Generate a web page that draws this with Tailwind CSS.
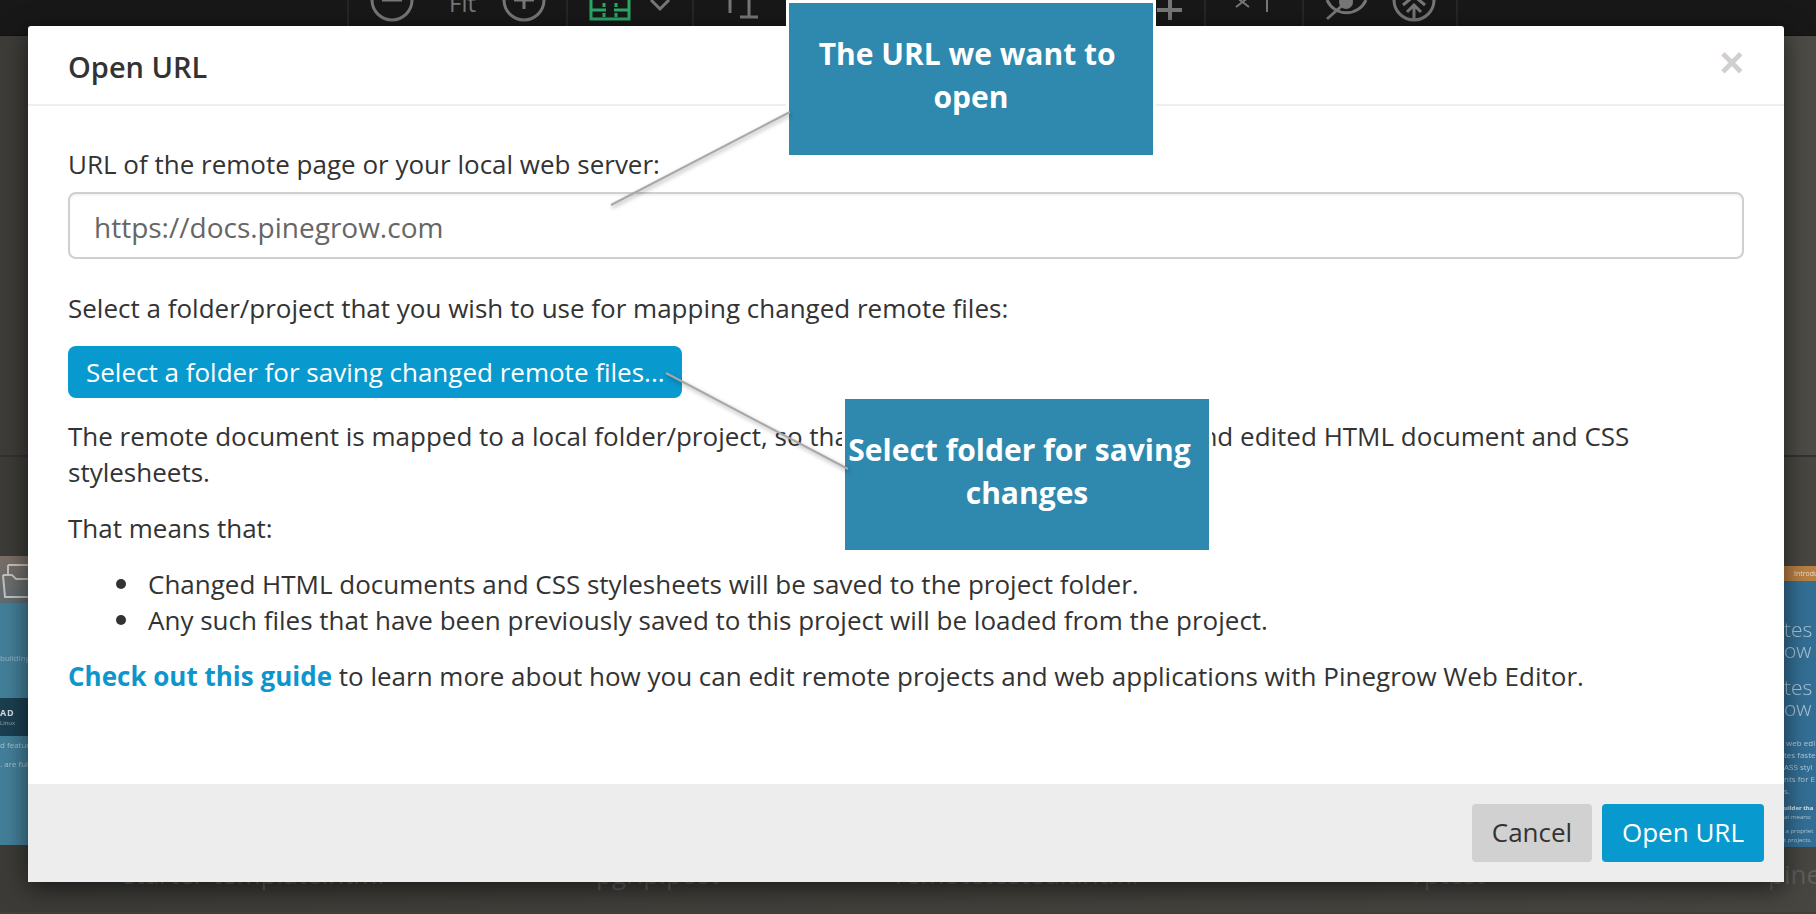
<!DOCTYPE html>
<html lang="en">
  <head>
    <meta charset="UTF-8" />
    <title>Open URL</title>
    <script src="https://cdn.jsdelivr.net/npm/@tailwindcss/browser@4"></script>
  </head>
  <body class="m-0 p-0 overflow-hidden bg-[#403f3b]">
    <div class="relative w-[1816px] h-[914px] overflow-hidden font-['Open_Sans',sans-serif] text-[#333]">
      <!-- toolbar behind the dialog -->
      <div class="h-[36px] bg-[#181818] border-b border-[#111]">
        <svg width="1816" height="36" viewBox="0 0 1816 36" fill="none" stroke="#777" stroke-width="3">
          <g stroke="#2b2b2b" stroke-width="1.5">
            <path d="M348 0V26M567 0V26M693 0V26M1205 0V26M1303 0V26M1457 0V26" />
          </g>
          <circle cx="392" cy="0" r="20" />
          <path d="M382 0H402" />
          <circle cx="524" cy="0" r="20" />
          <path d="M514 0H534M524 -8V9" />
          <text x="449" y="12" fill="#777" stroke="none" font-size="24" font-family="Open Sans">Fit</text>
          <path d="M591 0V19H629V0M591 10H606M614 10H629M604 3V7M616 3V7M604 13V17M616 13V17" stroke="#2aa866" />
          <path d="M651 0L660 9L669 0" />
          <path d="M730 0V13M749 0V17M740 17H758" />
          <path d="M1157 10H1182M1170 0V20" stroke-width="4" />
          <path d="M1236 -3L1249 7M1249 -3L1236 7M1267 0V12" stroke-width="2" />
          <path d="M1327 0C1335 17 1358 17 1366 0M1327 19L1345 3" />
          <circle cx="1346" cy="2" r="7" fill="#777" stroke="none" />
          <circle cx="1414" cy="0" r="20" />
          <path d="M1414 19V6M1407 12L1414 5L1421 12M1403 5L1414 -4L1425 5" />
        </svg>
      </div>

      <!-- page thumbnails behind the dialog -->
      <div class="h-[421px] bg-gradient-to-r from-[#3d3c38] to-[#4c4b46] border-b-2 border-[#33322f]"></div>
      <div class="h-[455px] bg-gradient-to-r from-[#3c3b37] to-[#474641]"></div>

      <div class="absolute left-0 top-[556px] w-[28px] h-[289px] bg-[#437f99] overflow-hidden blur-[0.4px]">
        <div class="h-[47px] bg-gradient-to-b from-[#7a6e66] to-[#5d6b72]">
          <svg width="28" height="47" viewBox="0 0 28 47" fill="none" stroke="#c4c0ba" stroke-width="2">
            <path d="M8 9H28M8 9V19M3 19H12L16 23H28M3 19L5 41H28" />
          </svg>
        </div>
        <p class="mt-[50px] text-[8px] leading-[10px] text-white/40 whitespace-nowrap">building</p>
        <div class="mt-[35px] h-[38px] bg-[#1b3f50] text-white/80">
          <p class="pt-[10px] text-[9px] leading-[10px] font-bold tracking-widest">AD</p>
          <p class="text-[6px] leading-[10px] text-white/50">Linux</p>
        </div>
        <p class="mt-[3px] text-[8px] leading-[12px] text-white/50 whitespace-nowrap">d features</p>
        <p class="mt-[7px] text-[8px] leading-[12px] text-white/50 whitespace-nowrap">. are fully</p>
      </div>

      <div class="absolute left-[1784px] top-[566px] w-[32px] h-[281px] bg-[#336f95] overflow-hidden blur-[0.3px] text-white/60 whitespace-nowrap">
        <div class="h-[15px] bg-[#b98043] pl-[10px] text-[7px] leading-[15px] text-white/70">Introdu</div>
        <div class="mt-[38px] text-[21px] font-light leading-[21px]">
          <p>tes f</p>
          <p>ow 5</p>
          <p class="mt-[16px]">tes f</p>
          <p>ow 5</p>
        </div>
        <div class="mt-[18px] text-[8px] leading-[12px]">
          <p>&nbsp;web edi</p>
          <p>tes faste</p>
          <p>ASS styl</p>
          <p>nts for E</p>
          <p>s.</p>
        </div>
        <p class="mt-[7px] text-[6px] leading-[9px] font-bold text-white/80">uilder tha</p>
        <p class="text-[6px] leading-[9px]">at means:</p>
        <p class="mt-[5px] text-[6px] leading-[9px]">&nbsp;a propriet</p>
        <p class="text-[6px] leading-[9px]">t projects.</p>
      </div>

      <div class="absolute left-0 top-[858px] w-[1816px] h-[32px] text-[26px] leading-[32px] text-[#5f5e59] whitespace-nowrap">
        <span class="absolute left-[123px]">starter-template.html</span>
        <span class="absolute left-[596px]">pgrip.post</span>
        <span class="absolute left-[895px]">remotetestedit.html</span>
        <span class="absolute left-[1413px]">rptest</span>
        <span class="absolute left-[1768px]">pine</span>
      </div>

      <!-- dialog -->
      <div class="absolute left-[28px] top-[26px] w-[1756px] h-[856px] flex flex-col bg-white rounded-[3px] shadow-[0_6px_26px_rgba(0,0,0,0.6)]">
        <div class="h-[80px] shrink-0 flex items-center justify-between pl-10 pr-[40px] border-b-2 border-[#eeeeee]">
          <h1 class="text-[29px] leading-[36px] font-semibold text-[#333] mt-[3px]">Open URL</h1>
          <span class="text-[#cfcfcf] text-[42px] leading-none font-bold font-['Liberation_Sans',sans-serif] -mt-[4px]">×</span>
        </div>
        <div class="flex-1 px-10 pt-[40px] text-[26px] leading-[36px]">
          <p class="mb-[10px]">URL of the remote page or your local web server:</p>
          <div class="h-[67px] px-[24px] pt-[2px] flex items-center border-2 border-[#cfcfcf] rounded-[8px] text-[28px] text-[#666] shadow-[inset_0_2px_2px_rgba(0,0,0,0.05)]">https://docs.pinegrow.com</div>
          <p class="mt-[31px] mb-[20px]">Select a folder/project that you wish to use for mapping changed remote files:</p>
          <button class="h-[52px] w-[614px] pl-[18px] text-left bg-[#0899cf] text-white rounded-[8px] whitespace-nowrap">Select a folder for saving changed remote files...</button>
          <p class="mt-[20px]">The remote document is mapped to a local folder/project, so that we can resave all changed and edited HTML document and CSS stylesheets.</p>
          <p class="mt-[20px]">That means that:</p>
          <ul class="mt-[20px] pl-20">
            <li class="relative before:absolute before:left-[-32px] before:top-[13px] before:w-[10px] before:h-[10px] before:rounded-full before:bg-[#333]">Changed HTML documents and CSS stylesheets will be saved to the project folder.</li>
            <li class="relative before:absolute before:left-[-32px] before:top-[13px] before:w-[10px] before:h-[10px] before:rounded-full before:bg-[#333]">Any such files that have been previously saved to this project will be loaded from the project.</li>
          </ul>
          <p class="mt-[20px]"><a class="text-[#0e96cc] font-bold">Check out this guide</a> to learn more about how you can edit remote projects and web applications with Pinegrow Web Editor.</p>
        </div>
        <div class="h-[98px] shrink-0 flex items-center justify-end gap-[10px] pr-[20px] bg-[#ededed] text-[26px]">
          <button class="w-[120px] h-[58px] pb-[2px] bg-[#d1d1d1] rounded-[4px] text-[#333]">Cancel</button>
          <button class="w-[162px] h-[58px] pb-[2px] bg-[#0899cf] rounded-[4px] text-white">Open URL</button>
        </div>
      </div>

      <!-- tutorial callouts over the dialog -->
      <div class="absolute left-[786px] top-0 w-[370px] h-[158px] border-[3px] border-white bg-[#2f89ae] text-white text-center text-[30px] leading-[43px] font-bold pt-[29px] px-2">The URL we want to&nbsp; open</div>
      <div class="absolute left-[842px] top-[396px] w-[370px] h-[157px] border-[3px] border-white bg-[#2f89ae] text-white text-center text-[30px] leading-[43px] font-bold pt-[29px] px-0">Select folder for saving&ensp; changes</div>
      <svg class="absolute left-0 top-0 drop-shadow-[1px_2px_2px_rgba(0,0,0,0.35)]" width="1816" height="914" fill="none" stroke="#a8a8a8" stroke-width="2">
        <path d="M790 112L611 205" />
        <path d="M666 373L848 469" />
      </svg>
    </div>
  </body>
</html>
